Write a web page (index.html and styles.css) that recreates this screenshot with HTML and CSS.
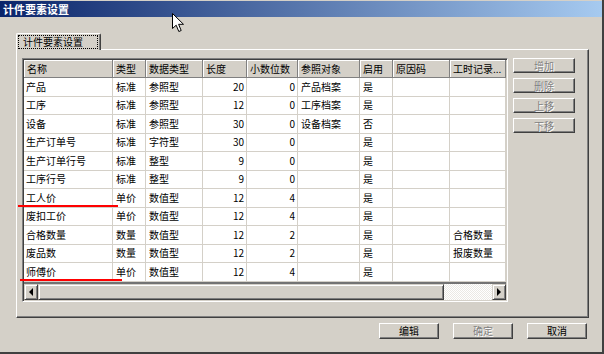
FILE: index.html
```html
<!DOCTYPE html>
<html lang="zh-CN">

<head>
  <meta charset="UTF-8">
  <title>计件要素设置</title>
  <link rel="stylesheet" href="styles.css">
</head>

<body>
  <div class="window">
    <div class="titlebar">计件要素设置</div>

    <div class="tabs">
      <div class="tab"><span class="tab-label">计件要素设置</span></div>
    </div>

    <div class="panel">
      <div class="grid">
        <div class="grid-body">
          <table class="grid-table">
            <thead>
              <tr>
                <th class="c-name">名称</th>
                <th class="c-type">类型</th>
                <th class="c-dtype">数据类型</th>
                <th class="c-len">长度</th>
                <th class="c-dec">小数位数</th>
                <th class="c-ref">参照对象</th>
                <th class="c-on">启用</th>
                <th class="c-reason">原因码</th>
                <th class="c-hours">工时记录...</th>
              </tr>
            </thead>
            <tbody>
              <tr><td>产品</td><td>标准</td><td>参照型</td><td class="num">20</td><td class="num">0</td><td>产品档案</td><td>是</td><td></td><td></td></tr>
              <tr><td>工序</td><td>标准</td><td>参照型</td><td class="num">12</td><td class="num">0</td><td>工序档案</td><td>是</td><td></td><td></td></tr>
              <tr><td>设备</td><td>标准</td><td>参照型</td><td class="num">30</td><td class="num">0</td><td>设备档案</td><td>否</td><td></td><td></td></tr>
              <tr><td>生产订单号</td><td>标准</td><td>字符型</td><td class="num">30</td><td class="num">0</td><td></td><td>是</td><td></td><td></td></tr>
              <tr><td>生产订单行号</td><td>标准</td><td>整型</td><td class="num">9</td><td class="num">0</td><td></td><td>是</td><td></td><td></td></tr>
              <tr><td>工序行号</td><td>标准</td><td>整型</td><td class="num">9</td><td class="num">0</td><td></td><td>是</td><td></td><td></td></tr>
              <tr><td>工人价</td><td>单价</td><td>数值型</td><td class="num">12</td><td class="num">4</td><td></td><td>是</td><td></td><td></td></tr>
              <tr><td>废扣工价</td><td>单价</td><td>数值型</td><td class="num">12</td><td class="num">4</td><td></td><td>是</td><td></td><td></td></tr>
              <tr><td>合格数量</td><td>数量</td><td>数值型</td><td class="num">12</td><td class="num">2</td><td></td><td>是</td><td></td><td>合格数量</td></tr>
              <tr><td>废品数</td><td>数量</td><td>数值型</td><td class="num">12</td><td class="num">2</td><td></td><td>是</td><td></td><td>报废数量</td></tr>
              <tr><td>师傅价</td><td>单价</td><td>数值型</td><td class="num">12</td><td class="num">4</td><td></td><td>是</td><td></td><td></td></tr>
            </tbody>
          </table>
        </div>
        <div class="hscroll">
          <div class="sb-btn sb-left"></div>
          <div class="sb-thumb"></div>
          <div class="sb-track"></div>
          <div class="sb-btn sb-right"></div>
        </div>
      </div>

      <div class="side-buttons">
        <button class="btn side-btn" disabled>增加</button>
        <button class="btn side-btn" disabled>删除</button>
        <button class="btn side-btn" disabled>上移</button>
        <button class="btn side-btn" disabled>下移</button>
      </div>
    </div>

    <div class="footer">
      <button class="btn foot-btn">编辑</button>
      <button class="btn foot-btn" disabled>确定</button>
      <button class="btn foot-btn">取消</button>
    </div>

    <!-- red underline marks drawn over the grid -->
    <div class="mark mark-1"></div>
    <div class="mark mark-2"></div>

    <svg class="cursor" width="13" height="20" viewBox="0 0 13 20">
      <path d="M0.5 0.5 L0.5 15.5 L4.2 12.2 L6.8 18.5 L9.2 17.5 L6.6 11.3 L11.5 11.3 Z" fill="#fff" stroke="#000" stroke-width="1" />
    </svg>
  </div>
</body>

</html>
```

FILE: styles.css
```css
* {
  box-sizing: border-box;
}

body {
  margin: 0;
  background: #d4d0c8;
  font-family: "Noto Sans CJK SC", "Liberation Sans", sans-serif;
  font-size: 10px;
  color: #000;
}

.window {
  position: relative;
  width: 604px;
  height: 354px;
  padding-top: 1px;
  background: #d4d0c8;
  border-right: 2px solid #404040;
  border-bottom: 2px solid #404040;
  overflow: hidden;
}

.titlebar {
  height: 16px;
  line-height: 16px;
  padding-left: 3px;
  color: #fff;
  font-size: 11px;
  font-weight: bold;
  background: linear-gradient(to right, #0a246a, #a6caf0);
}

.tabs {
  display: flex;
  margin-top: 16px;
  padding-left: 16px;
}

.tab {
  position: relative;
  z-index: 1;
  width: 85px;
  height: 17px;
  margin-bottom: -1px;
  padding: 0 0 0 1px;
  background: #d4d0c8;
  border-top: 1px solid #fff;
  border-left: 1px solid #fff;
  border-right: 1px solid #404040;
  border-radius: 2px 2px 0 0;
  box-shadow: inset -1px 0 #808080;
}

.tab-label {
  display: block;
  width: 80px;
  height: 14px;
  margin-top: 1px;
  padding-left: 4px;
  line-height: 12px;
  font-size: 10px;
  border: 1px dotted #000;
}

.panel {
  display: flex;
  gap: 5px;
  width: 573px;
  height: 269px;
  margin-left: 16px;
  padding: 8px 0 0 5px;
  border-top: 1px solid #fff;
  border-left: 1px solid #fff;
  border-right: 1px solid #404040;
  border-bottom: 1px solid #404040;
  box-shadow: inset -1px -1px #808080;
}

.grid {
  display: flex;
  flex-direction: column;
  width: 486px;
  height: 244px;
  padding: 1px;
  border: 1px solid;
  border-color: #808080 #fff #fff #808080;
  box-shadow: inset 1px 1px #404040, inset -1px -1px #d4d0c8;
}

.grid-body {
  flex: 1;
  overflow: hidden;
  background: #737373;
}

.grid-table {
  width: 482px;
  table-layout: fixed;
  border-collapse: separate;
  border-spacing: 0;
}

.grid-table thead tr {
  height: 18px;
}

.grid-table tbody tr {
  height: 18.5px;
}

.grid-table th,
.grid-table td {
  padding: 0 2px 0 3px;
  line-height: 14px;
  font-size: 10px;
  text-align: left;
  white-space: nowrap;
  overflow: hidden;
}

.grid-table th {
  font-weight: normal;
  background: #d4d0c8;
  border-right: 1px solid #808080;
  border-bottom: 1px solid #808080;
  box-shadow: inset 1px 1px #fff;
}

.grid-table td {
  background: #fff;
  border-right: 1px solid #d4d0c8;
  border-bottom: 1px solid #d4d0c8;
}

.grid-table td:first-child {
  padding-left: 2px;
}

.grid-table .num {
  text-align: right;
  padding-right: 2px;
}

.c-name { width: 89px; }
.c-type { width: 33px; }
.c-dtype { width: 57px; }
.c-len { width: 44px; }
.c-dec { width: 51px; }
.c-ref { width: 62px; }
.c-on { width: 33px; }
.c-reason { width: 57px; }
.c-hours { width: 56px; }

.hscroll {
  display: flex;
  height: 16px;
}

.sb-btn,
.sb-thumb {
  background: #d4d0c8;
  border: 1px solid;
  border-color: #d4d0c8 #404040 #404040 #d4d0c8;
  box-shadow: inset 1px 1px #fff, inset -1px -1px #808080;
}

.sb-btn {
  display: flex;
  align-items: center;
  justify-content: center;
  width: 14px;
}

.sb-left::before,
.sb-right::before {
  content: "";
  width: 0;
  height: 0;
  border-top: 4px solid transparent;
  border-bottom: 4px solid transparent;
}

.sb-left::before {
  border-right: 4px solid #000;
}

.sb-right::before {
  border-left: 4px solid #000;
}

.sb-thumb {
  width: 406px;
}

.sb-track {
  flex: 1;
  background: repeating-conic-gradient(#fff 0 25%, #ebe9e4 0 50%) 0 0 / 2px 2px;
}

.side-buttons {
  display: flex;
  flex-direction: column;
  gap: 5px;
  width: 62px;
}

.btn {
  padding: 0;
  font-family: inherit;
  font-size: 10px;
  line-height: 12px;
  color: #000;
  background: #d4d0c8;
  border: 1px solid;
  border-color: #fff #404040 #404040 #fff;
  box-shadow: inset -1px -1px #808080;
}

.btn:disabled {
  color: #808080;
  text-shadow: 1px 1px #fff;
}

.side-btn {
  height: 15px;
}

.footer {
  display: flex;
  justify-content: flex-end;
  gap: 14px;
  margin-top: 5px;
  padding-right: 15px;
}

.foot-btn {
  width: 60px;
  height: 16px;
}

.mark {
  position: absolute;
  height: 2px;
  background: #f00;
}

.mark-1 {
  left: 18px;
  top: 205px;
  width: 100px;
}

.mark-2 {
  left: 20px;
  top: 279px;
  width: 102px;
}

.cursor {
  position: absolute;
  left: 172px;
  top: 13px;
}
```
